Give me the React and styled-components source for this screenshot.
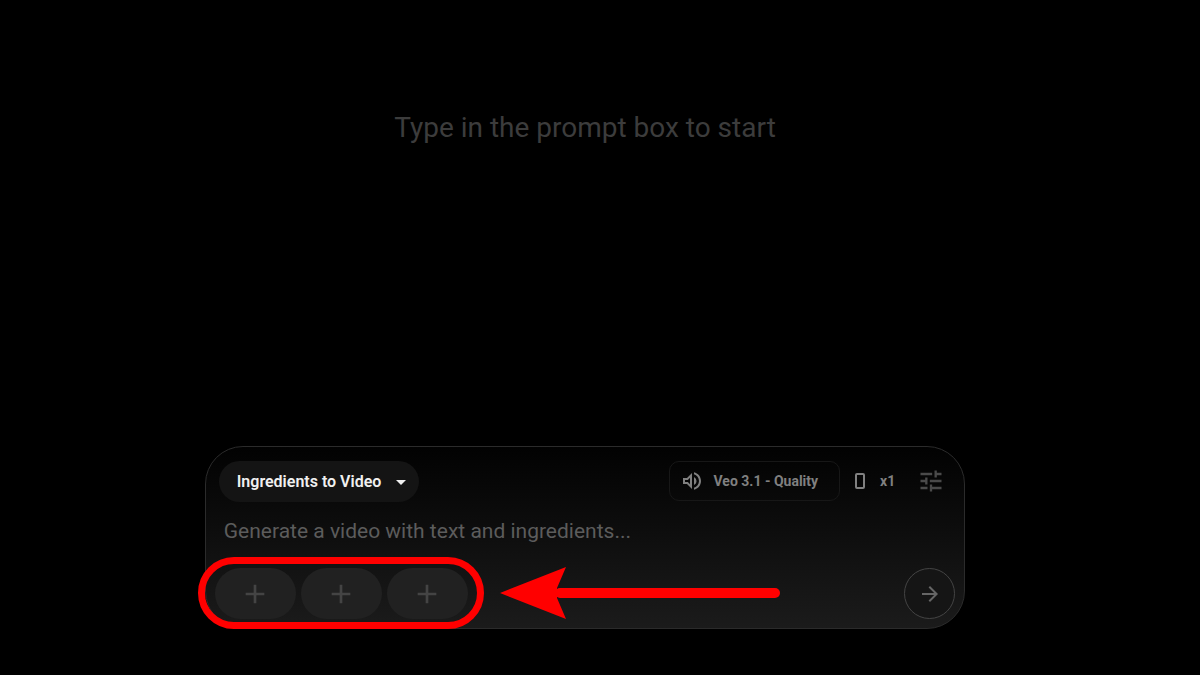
import React from 'react';
import styled, { createGlobalStyle } from 'styled-components';
import { MdAdd, MdArrowDropDown, MdArrowForward, MdOutlineVolumeUp, MdTune } from 'react-icons/md';

const GlobalStyle = createGlobalStyle`
  * {
    box-sizing: border-box;
  }
  body {
    margin: 0;
    background: #000;
    font-family: Roboto, "Liberation Sans", sans-serif;
  }
  button, input {
    font-family: inherit;
    margin: 0;
  }
`;

const Page = styled.main`
  min-height: 100vh;
  padding: 110px 30px 46px 0;
  display: flex;
  flex-direction: column;
  align-items: center;
  justify-content: space-between;
`;

const Title = styled.h1`
  margin: 0;
  font-size: 28px;
  font-weight: 400;
  line-height: 36px;
  color: #3c3c3c;
`;

const Panel = styled.form`
  width: 65%;
  min-width: 700px;
  padding: 14px 9px 9px 9px;
  border: 1px solid #2b2b2b;
  border-radius: 38px;
  background: linear-gradient(#020202, #0d0d0d 45%, #1b1b1b);
`;

const Row = styled.div`
  display: flex;
  align-items: center;
  justify-content: space-between;
`;

const TopRow = styled(Row)`
  align-items: flex-start;
  padding: 0 10px 0 4px;
`;

const ModeButton = styled.button`
  height: 41px;
  padding: 0 6px 0 18px;
  display: flex;
  align-items: center;
  gap: 8px;
  border: 0;
  border-radius: 21px;
  background: #141414;
  color: #f0f0f0;
  font-size: 16px;
  font-weight: 600;
`;

const Settings = styled.div`
  display: flex;
  align-items: center;
  color: #808080;
  font-size: 14px;
  font-weight: 700;
`;

const ModelButton = styled.button`
  height: 40px;
  padding: 0 21px 0 10px;
  margin-right: 14px;
  display: flex;
  align-items: center;
  gap: 10px;
  border: 1px solid #171717;
  border-radius: 10px;
  background: transparent;
  color: inherit;
  font-size: 14px;
  font-weight: 700;
`;

const Count = styled.span`
  margin: 0 22px 0 14px;
`;

const IconButton = styled.button`
  padding: 0;
  display: flex;
  border: 0;
  background: transparent;
  color: #4a4a4a;
`;

const Prompt = styled.input`
  display: block;
  width: 100%;
  height: 32px;
  margin: 13px 0 21px;
  padding: 0 9px;
  border: 0;
  outline: 0;
  background: transparent;
  color: #ddd;
  font-size: 21px;
  &::placeholder {
    color: #5c5c5c;
    opacity: 1;
  }
`;

const Ingredients = styled.div`
  position: relative;
  display: flex;
  gap: 5px;
`;

const AddButton = styled.button`
  width: 81px;
  height: 51px;
  padding: 0;
  display: flex;
  align-items: center;
  justify-content: center;
  border: 0;
  border-radius: 26px;
  background: #212121;
  color: #444;
`;

const SendButton = styled.button`
  width: 51px;
  height: 51px;
  padding: 0;
  display: flex;
  align-items: center;
  justify-content: center;
  border: 1px solid #444;
  border-radius: 50%;
  background: #151515;
  color: #666;
`;

const Highlight = styled.div`
  position: absolute;
  inset: -11px -16px -10px -17px;
  border: 7px solid #f00;
  border-radius: 36px;
  pointer-events: none;
`;

const Arrow = styled.svg`
  position: absolute;
  left: calc(100% + 32px);
  top: -2px;
  pointer-events: none;
`;

const PortraitIcon = () => (
  <svg width="12" height="18" viewBox="0 0 12 18" fill="none" stroke="currentColor" strokeWidth="2">
    <rect x="2" y="2" width="8" height="14" rx="1" />
  </svg>
);

const App = () => {
  return (
    <>
      <GlobalStyle />
      <Page>
        <Title>Type in the prompt box to start</Title>
        <Panel onSubmit={(e) => e.preventDefault()}>
          <TopRow>
            <ModeButton type="button">
              Ingredients to Video
              <MdArrowDropDown size={24} />
            </ModeButton>
            <Settings>
              <ModelButton type="button">
                <MdOutlineVolumeUp size={24} />
                Veo 3.1 - Quality
              </ModelButton>
              <PortraitIcon />
              <Count>x1</Count>
              <IconButton type="button" aria-label="Settings">
                <MdTune size={28} />
              </IconButton>
            </Settings>
          </TopRow>
          <Prompt aria-label="Prompt" placeholder="Generate a video with text and ingredients..." />
          <Row>
            <Ingredients>
              {[1, 2, 3].map((n) => (
                <AddButton key={n} type="button" aria-label={`Add ingredient ${n}`}>
                  <MdAdd size={32} />
                </AddButton>
              ))}
              <Highlight />
              <Arrow width="280" height="54" viewBox="0 0 280 54" aria-hidden="true">
                <path d="M60 27H275" stroke="#f00" strokeWidth="10" strokeLinecap="round" />
                <path d="M0 27L66 1L57 22V32L66 53Z" fill="#f00" />
              </Arrow>
            </Ingredients>
            <SendButton type="submit" aria-label="Generate">
              <MdArrowForward size={24} />
            </SendButton>
          </Row>
        </Panel>
      </Page>
    </>
  );
};

export default App;
